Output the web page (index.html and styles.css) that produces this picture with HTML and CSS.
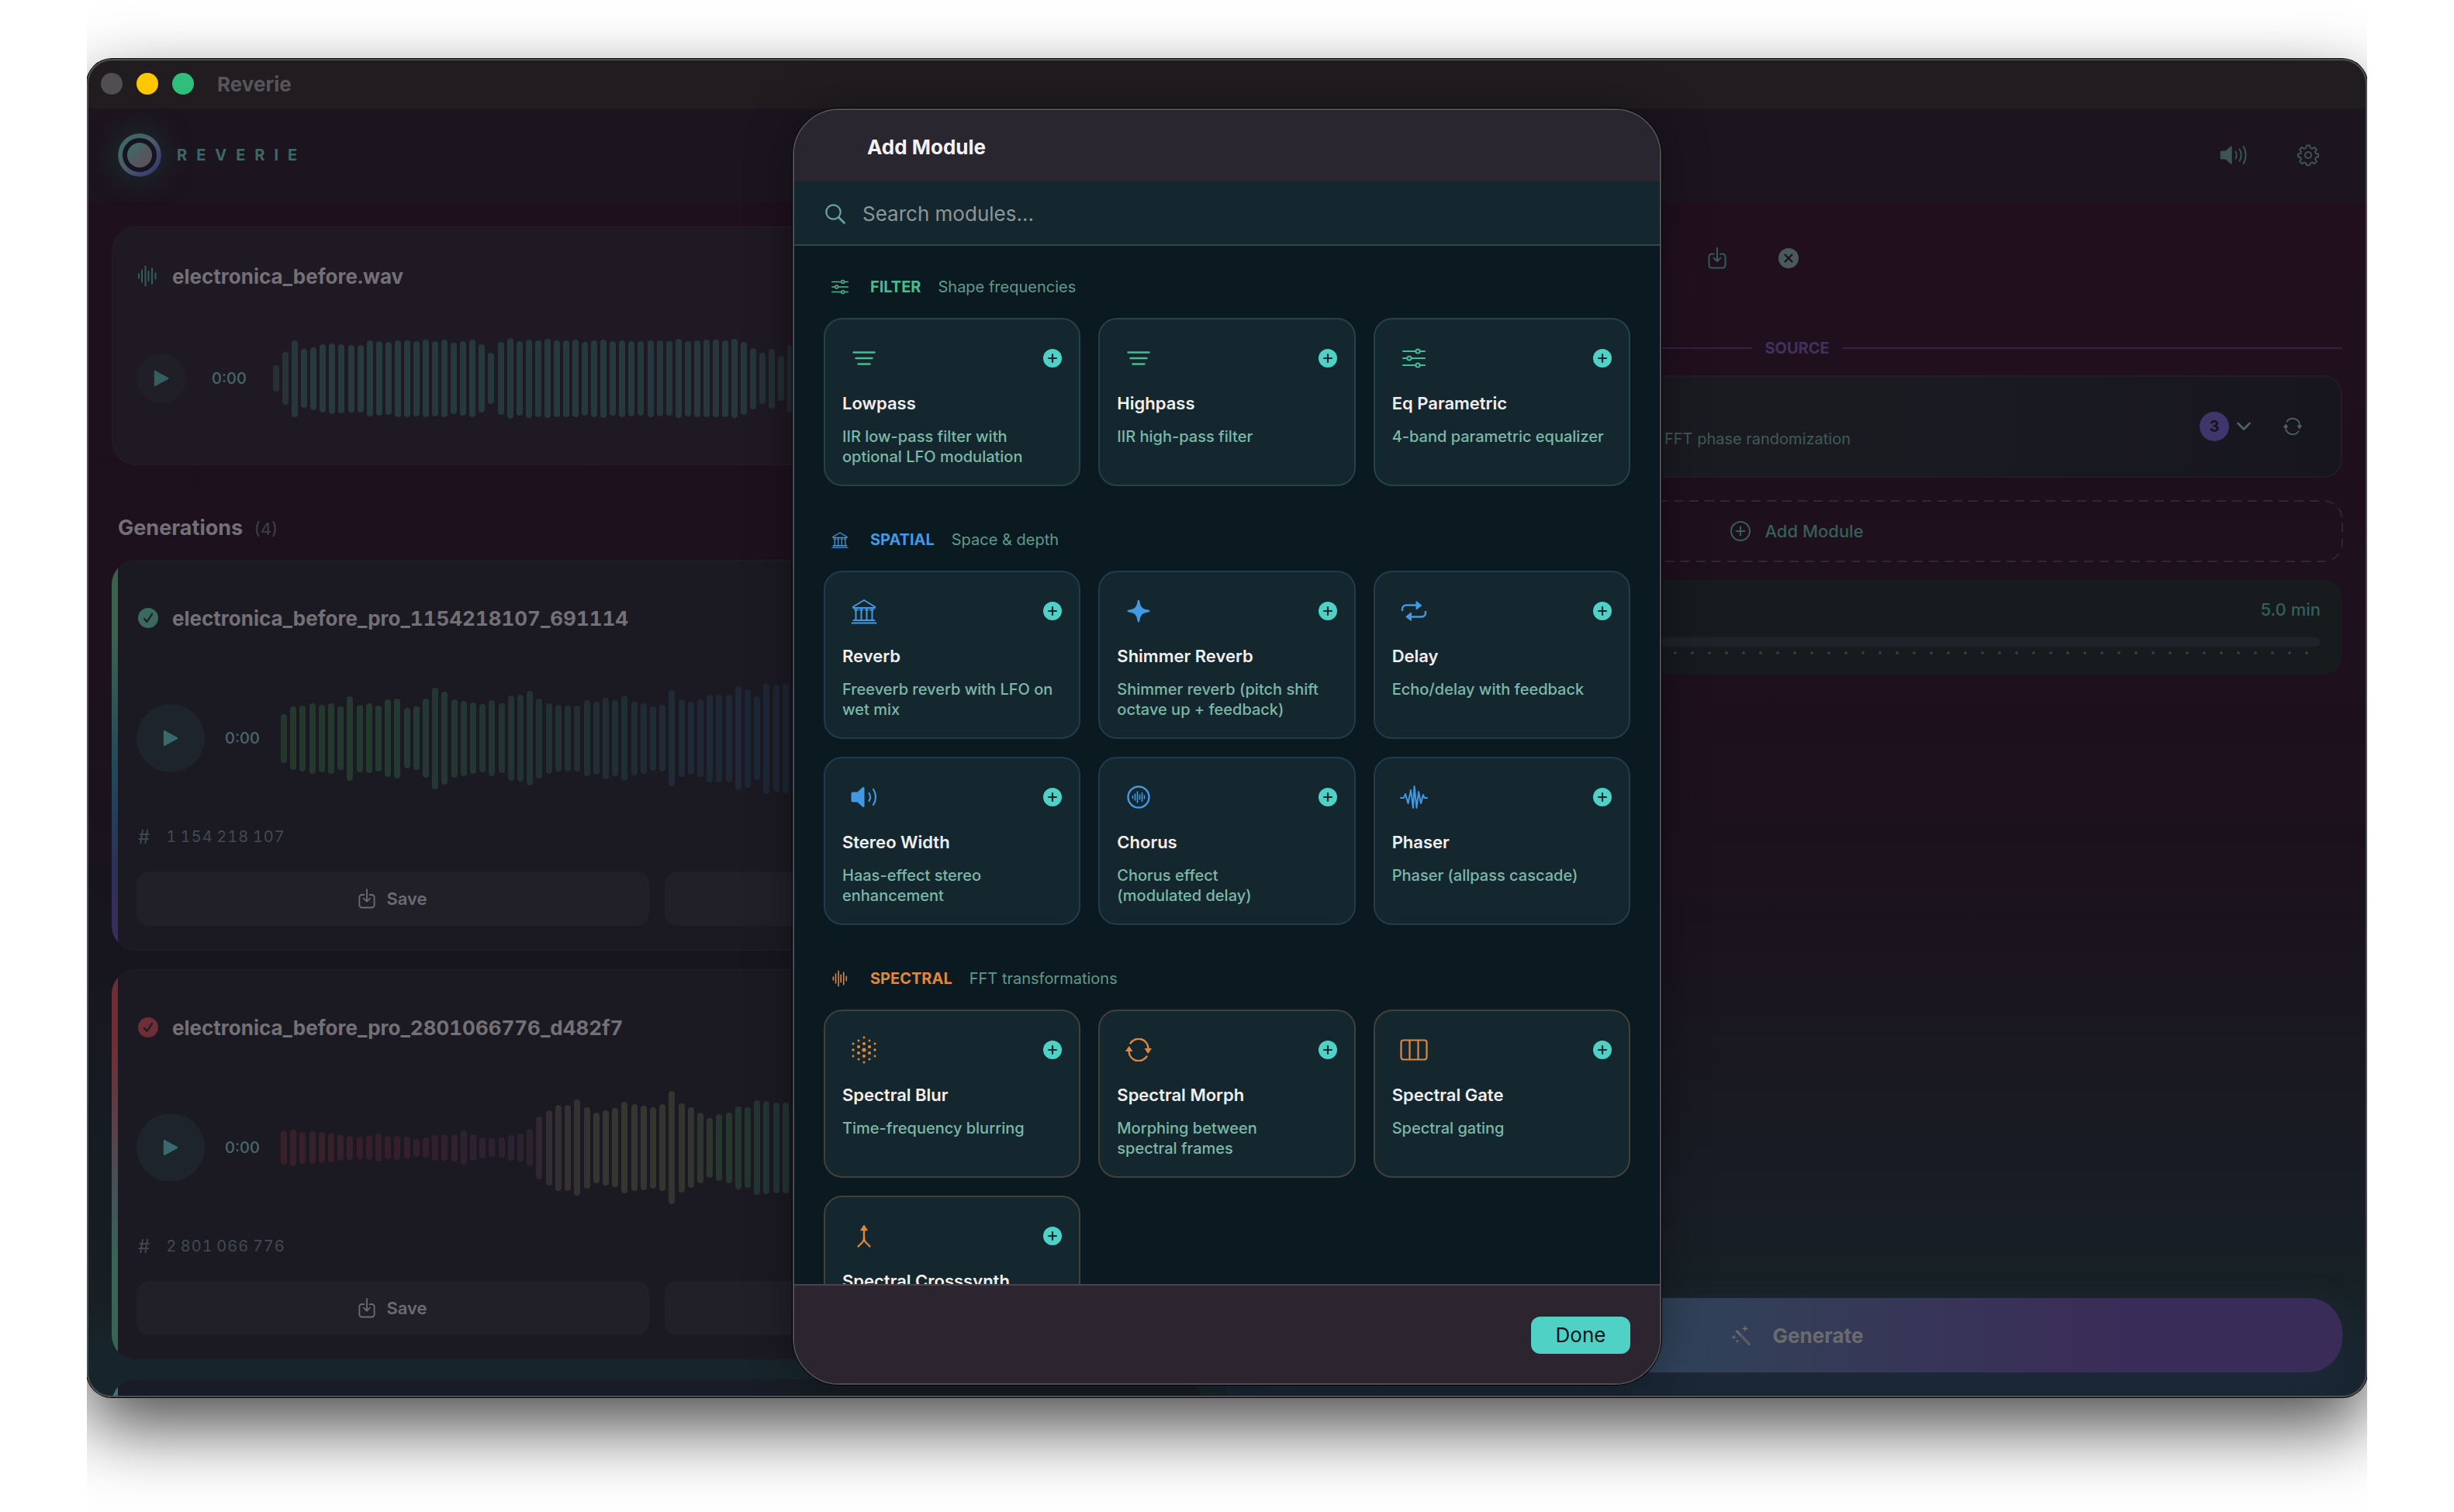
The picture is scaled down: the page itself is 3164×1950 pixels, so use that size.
FILE: index.html
```html
<!DOCTYPE html>
<html lang="en">
<head>
  <meta charset="UTF-8" />
  <meta name="viewport" content="width=device-width, initial-scale=1.0" />
  <title>Reverie</title>
  <link rel="stylesheet" href="styles.css">
</head>
<body>
  <!-- Icon set -->
  <svg class="icon-defs" aria-hidden="true">
    <defs>
      <linearGradient id="ringFill" x1="0" y1="0" x2="1" y2="1">
        <stop offset="0.1" stop-color="#3b6a61" />
        <stop offset="0.5" stop-color="#4b5a6c" />
        <stop offset="0.9" stop-color="#373c70" />
      </linearGradient>
      <linearGradient id="coreFill" x1="0" y1="0" x2="1" y2="1">
        <stop offset="0.1" stop-color="#3a6c68" />
        <stop offset="0.6" stop-color="#56565f" />
        <stop offset="1" stop-color="#58525a" />
      </linearGradient>
    </defs>
    <symbol id="i-wave" viewBox="0 0 28 28">
      <path d="M3 11.500v5M7 6.500v15M11.500 1.500v25M15.500 8v12M20 4v20M24.500 10.500v7" stroke="currentColor" stroke-width="2" stroke-linecap="round" fill="none" />
    </symbol>
    <symbol id="i-sliders" viewBox="0 0 30 26">
      <g stroke="currentColor" stroke-width="2" stroke-linecap="round" fill="none">
        <path d="M1 4h16M23 4h6M1 13h5M12 13h17M1 22h16M23 22h6" />
        <circle cx="20" cy="4" r="2.600" /><circle cx="9" cy="13" r="2.600" /><circle cx="20" cy="22" r="2.600" />
      </g>
    </symbol>
    <symbol id="i-lines" viewBox="0 0 30 26">
      <path d="M1.500 5.500h27M4.500 13h21M7.500 20.500h15" stroke="currentColor" stroke-width="2.400" stroke-linecap="round" />
    </symbol>
    <symbol id="i-building" viewBox="0 0 34 34">
      <g stroke="currentColor" stroke-width="2" stroke-linecap="round" stroke-linejoin="round" fill="none">
        <path d="M3 11.500 17 3l14 8.500v1.500H3zM1.500 32.500h31M3.500 29h27" />
        <path d="M6.500 15v13M13.500 15v13M20.500 15v13M27.500 15v13M5 15.500h4M12 15.500h3M19 15.500h3M25 15.500h4" />
      </g>
    </symbol>
    <symbol id="i-sparkle" viewBox="0 0 30 30">
      <path d="M15 .5c.9 0 1.200 1 1.400 2 1 7 3.100 10.100 11.100 11.100 1 .2 2 .5 2 1.400s-1 1.200-2 1.400c-8 1-10.100 4.100-11.100 11.100-.2 1-.5 2-1.400 2s-1.200-1-1.400-2c-1-7-3.100-10.100-11.100-11.100-1-.2-2-.5-2-1.400s1-1.200 2-1.400c8-1 10.100-4.100 11.100-11.100.2-1 .5-2 1.400-2z" fill="currentColor" />
    </symbol>
    <symbol id="i-repeat" viewBox="0 0 34 28">
      <path d="M2 13v-1.500a5 5 0 0 1 5-5h13M32 15v1.500a5 5 0 0 1-5 5H14" stroke="currentColor" stroke-width="2.400" stroke-linecap="round" fill="none" />
      <path d="M19.500 2v9.500c0 .8.700 1 1.300.6l6-4.600c.5-.4.500-.9 0-1.300l-6-4.600c-.6-.4-1.300-.3-1.300.4zM14 16.500V26c0 .8-.7 1-1.300.6l-6-4.600c-.5-.4-.5-.9 0-1.300l6-4.600c.6-.4 1.300-.3 1.300.4z" fill="currentColor" />
    </symbol>
    <symbol id="i-speaker" viewBox="0 0 34 28">
      <path d="M3 7.500h5.500l6.500-6c1.200-1 2.500-.6 2.500 1v23c0 1.600-1.300 2-2.500 1l-6.500-6H3c-1.800 0-2.500-.8-2.500-2.500v-8C.5 8.300 1.200 7.500 3 7.500z" fill="currentColor" />
      <path d="M23.500 9c1.900 3 1.900 7 0 10M29 4c4 6 4 14 0 20" stroke="currentColor" stroke-width="2.200" stroke-linecap="round" fill="none" />
    </symbol>
    <symbol id="i-speaker-max" viewBox="0 0 36 28">
      <path d="M3 8.500h4.500l6-5.500c1-.9 2.200-.5 2.200 1v20c0 1.500-1.200 1.900-2.200 1l-6-5.500H3c-1.600 0-2.300-.8-2.300-2.300v-6.400C.7 9.300 1.400 8.500 3 8.500z" fill="currentColor" />
      <path d="M20.500 9.500c1.500 2.700 1.500 6.300 0 9M25.500 6.500c2.700 4.500 2.700 10.500 0 15M30.500 3c4 6.500 4 15.500 0 22" stroke="currentColor" stroke-width="2" stroke-linecap="round" fill="none" />
    </symbol>
    <symbol id="i-wave-circle" viewBox="0 0 30 30">
      <g stroke="currentColor" stroke-linecap="round" fill="none">
        <circle cx="15" cy="15" r="13.500" stroke-width="2.400" />
        <path d="M7.500 13.500v3M10.500 11v8M13.500 8v14M16.500 12v6M19.500 9.500v11M22.500 13v4" stroke-width="1.600" />
      </g>
    </symbol>
    <symbol id="i-ecg" viewBox="0 0 36 32">
      <path d="M1 17h4l2-5 3.500 12L14 7l3 23L18.500 2l3 28L24 9l3 15 3-11 1.500 4H35" stroke="currentColor" stroke-width="2" stroke-linecap="round" stroke-linejoin="round" fill="none" />
    </symbol>
    <symbol id="i-dots" viewBox="0 0 36 36">
      <g fill="currentColor">
        <circle cx="18" cy="18" r="2.600" />
        <circle cx="18" cy="10" r="2.100" /><circle cx="18" cy="26" r="2.100" />
        <circle cx="11" cy="14" r="2.100" /><circle cx="11" cy="22" r="2.100" />
        <circle cx="25" cy="14" r="2.100" /><circle cx="25" cy="22" r="2.100" />
        <circle cx="11" cy="6" r="1.500" /><circle cx="25" cy="6" r="1.500" />
        <circle cx="11" cy="30" r="1.500" /><circle cx="25" cy="30" r="1.500" />
        <circle cx="4" cy="10" r="1.500" /><circle cx="32" cy="10" r="1.500" />
        <circle cx="4" cy="26" r="1.500" /><circle cx="32" cy="26" r="1.500" />
        <circle cx="4" cy="18" r="1.700" /><circle cx="32" cy="18" r="1.700" />
        <circle cx="18" cy="2" r="1.500" /><circle cx="18" cy="34" r="1.500" />
      </g>
    </symbol>
    <symbol id="i-cycle" viewBox="0 0 36 30">
      <path d="M7.500 6.500A12.500 12.500 0 0 1 30.500 13M28.500 23.500A12.500 12.500 0 0 1 5.500 17" stroke="currentColor" stroke-width="2.400" stroke-linecap="round" fill="none" />
      <path d="M25.500 13h9.500l-4.200 6.200c-.3.500-.9.500-1.200 0zM1 17h9.500L6.300 10.800c-.3-.5-.9-.5-1.200 0z" fill="currentColor" />
    </symbol>
    <symbol id="i-columns" viewBox="0 0 36 28">
      <path d="M4.500 1.500h27a3 3 0 0 1 3 3v19a3 3 0 0 1-3 3h-27a3 3 0 0 1-3-3v-19a3 3 0 0 1 3-3zM12.500 1.500v25M23.500 1.500v25" stroke="currentColor" stroke-width="2.200" fill="none" />
    </symbol>
    <symbol id="i-merge" viewBox="0 0 20 30">
      <path d="M10 6v11c0 3-.6 4.500-2 6l-5.500 5.500M10 17c0 3 .6 4.500 2 6l5.500 5.500" stroke="currentColor" stroke-width="2.400" stroke-linecap="round" fill="none" />
      <path d="M10.600 1.200l4 6c.3.600.1 1-.6 1H6c-.7 0-.9-.4-.6-1l4-6c.4-.5.800-.5 1.200 0z" fill="currentColor" />
    </symbol>
    <symbol id="i-plus-solid" viewBox="0 0 22 22">
      <circle cx="11" cy="11" r="11" fill="#4fd1c5" />
      <path d="M11 6.500v9M6.500 11h9" stroke="#14272e" stroke-width="2" stroke-linecap="round" />
    </symbol>
    <symbol id="i-plus-circle" viewBox="0 0 26 26">
      <circle cx="13" cy="13" r="12" stroke="currentColor" stroke-width="2" fill="none" />
      <path d="M13 7.500v11M7.500 13h11" stroke="currentColor" stroke-width="2" stroke-linecap="round" />
    </symbol>
    <symbol id="i-search" viewBox="0 0 26 26">
      <circle cx="10.500" cy="10.500" r="9.200" stroke="currentColor" stroke-width="2.200" fill="none" />
      <path d="M17.500 17.500l7 7" stroke="currentColor" stroke-width="2.600" stroke-linecap="round" />
    </symbol>
    <symbol id="i-save" viewBox="0 0 24 28">
      <path d="M8 8.500H5a3.500 3.500 0 0 0-3.500 3.500v11A3.500 3.500 0 0 0 5 26.500h14a3.500 3.500 0 0 0 3.500-3.500V12A3.500 3.500 0 0 0 19 8.500h-3M12 1v16.500M7.500 13.500l4.500 4.500 4.500-4.500" stroke="currentColor" stroke-width="2" stroke-linecap="round" stroke-linejoin="round" fill="none" />
    </symbol>
    <symbol id="i-close" viewBox="0 0 26 26">
      <circle cx="13" cy="13" r="13" fill="currentColor" />
      <path d="M8.500 8.500l9 9M17.500 8.500l-9 9" stroke="#210f1e" stroke-width="2.200" stroke-linecap="round" />
    </symbol>
    <symbol id="i-check" viewBox="0 0 26 26">
      <circle cx="13" cy="13" r="13" fill="currentColor" />
      <path d="M8 14l3.500 4L18 8" stroke="#1c1a22" stroke-width="2.200" stroke-linecap="round" stroke-linejoin="round" fill="none" />
    </symbol>
    <symbol id="i-play" viewBox="0 0 24 24">
      <path d="M2 2.500v19c0 1.300 1 1.700 2 1.100l17.500-9.500c.9-.6.900-1.600 0-2.200L4 1.400c-1-.6-2-.2-2 1.100z" fill="currentColor" />
    </symbol>
    <symbol id="i-gear" viewBox="0 0 28 28">
      <g stroke="currentColor" stroke-width="2" stroke-linejoin="round" fill="none">
        <path d="M12 1.500h4l.8 3.300 2.300 1 2.900-1.800 2.900 2.800-1.800 3 .9 2.200 3.200.8v3.400l-3.200.8-.9 2.300 1.800 3-2.900 2.800-2.900-1.800-2.300 1-.8 3h-4l-.8-3-2.300-1L6 25.100l-2.900-2.800 1.800-3-.9-2.300-3-.8v-3.400l3-.8.900-2.200-1.800-3L6 4l2.900 1.800 2.300-1z" />
        <circle cx="14" cy="14" r="4" />
      </g>
    </symbol>
    <symbol id="i-chevron" viewBox="0 0 18 12">
      <path d="M1.500 2L9 9.500 16.500 2" stroke="currentColor" stroke-width="2.600" stroke-linecap="round" stroke-linejoin="round" fill="none" />
    </symbol>
    <symbol id="i-wand" viewBox="0 0 26 26">
      <path d="M7.500 8L23.500 24.500" stroke="currentColor" stroke-width="3" stroke-linecap="round" />
      <path d="M12 12.600L23.300 24.300" stroke="#343c56" stroke-width="1" stroke-linecap="round" />
      <path d="M18 0c.5 3 1.500 4 5 4.500-3.500.5-4.500 1.500-5 4.500-.5-3-1.500-4-5-4.500 3.500-.5 4.500-1.500 5-4.500zM3.500 12c.4 2.400 1.100 3.100 3.500 3.500-2.400.4-3.100 1.100-3.500 3.500-.4-2.400-1.100-3.100-3.500-3.500 2.400-.4 3.100-1.100 3.500-3.500zM8 18c.3 1.900.9 2.500 3 2.800-2.100.3-2.700.9-3 2.800-.3-1.900-.9-2.500-3-2.800 2.100-.3 2.700-.9 3-2.800z" fill="currentColor" />
    </symbol>
  </svg>

  <div class="stage">
    <div class="window">
      <div class="titlebar">
        <span class="light close"></span>
        <span class="light minimize"></span>
        <span class="light zoom"></span>
        <span class="window-title">Reverie</span>
      </div>

      <header class="app-header">
        <svg class="logo" viewBox="0 0 56 56">
          <circle cx="28" cy="28" r="25" fill="#171422" stroke="url(#ringFill)" stroke-width="6" />
          <circle cx="28" cy="28" r="16" fill="url(#coreFill)" />
        </svg>
        <span class="brand">REVERIE</span>
        <button class="icon-btn" aria-label="Volume"><svg width="36" height="28"><use href="#i-speaker-max" /></svg></button>
        <button class="icon-btn" aria-label="Settings"><svg width="28" height="28"><use href="#i-gear" /></svg></button>
      </header>

      <main class="panels">
        <!-- Left: source file and results -->
        <section class="panel library">
          <div class="track source">
            <div class="track-head">
              <svg class="teal" width="28" height="28"><use href="#i-wave" /></svg>
              <h3>electronica_before.wav</h3>
            </div>
            <div class="player">
              <button class="play small" aria-label="Play"><svg width="22" height="22"><use href="#i-play" /></svg></button>
              <span class="time">0:00</span>
              <div class="waveform" data-wave="source"></div>
            </div>
          </div>

          <h2>Generations <span>(4)</span></h2>

          <div class="track result green">
            <div class="track-head">
              <svg class="state" width="26" height="26"><use href="#i-check" /></svg>
              <h3>electronica_before_pro_1154218107_691114</h3>
            </div>
            <div class="player">
              <button class="play" aria-label="Play"><svg width="22" height="22"><use href="#i-play" /></svg></button>
              <span class="time">0:00</span>
              <div class="waveform" data-wave="first"></div>
            </div>
            <div class="seed"><span>#</span>1&#8201;154&#8201;218&#8201;107</div>
            <div class="actions">
              <button><svg width="22" height="26"><use href="#i-save" /></svg>Save</button>
              <button aria-label="More"></button>
            </div>
          </div>

          <div class="track result red">
            <div class="track-head">
              <svg class="state" width="26" height="26"><use href="#i-check" /></svg>
              <h3>electronica_before_pro_2801066776_d482f7</h3>
            </div>
            <div class="player">
              <button class="play" aria-label="Play"><svg width="22" height="22"><use href="#i-play" /></svg></button>
              <span class="time">0:00</span>
              <div class="waveform" data-wave="second"></div>
            </div>
            <div class="seed"><span>#</span>2&#8201;801&#8201;066&#8201;776</div>
            <div class="actions">
              <button><svg width="22" height="26"><use href="#i-save" /></svg>Save</button>
              <button aria-label="More"></button>
            </div>
          </div>

          <div class="track result next"></div>
        </section>

        <!-- Right: processing chain -->
        <section class="panel chain">
          <div class="toolbar">
            <button class="icon-btn teal" aria-label="Save preset"><svg width="24" height="28"><use href="#i-save" /></svg></button>
            <button class="icon-btn" aria-label="Clear"><svg width="26" height="26"><use href="#i-close" /></svg></button>
          </div>

          <div class="divider">SOURCE</div>

          <div class="source-module">
            <p>FFT phase randomization</p>
            <button class="variant" aria-label="Variants"><span class="badge">3</span><svg width="18" height="12"><use href="#i-chevron" /></svg></button>
            <button class="icon-btn" aria-label="Shuffle"><svg width="26" height="24"><use href="#i-cycle" /></svg></button>
          </div>

          <button class="add-module">
            <svg class="dashes"><rect width="100%" height="100%" rx="24" /></svg>
            <svg width="26" height="26"><use href="#i-plus-circle" /></svg>Add Module
          </button>

          <div class="duration">
            <output for="duration">5.0 min</output>
            <input type="range" id="duration" aria-label="Duration" min="0" max="60" value="5" />
            <div class="ticks"></div>
          </div>

          <button class="generate"><svg width="26" height="26"><use href="#i-wand" /></svg>Generate</button>
        </section>
      </main>

      <!-- Add Module sheet -->
      <div class="overlay">
        <div class="modal" role="dialog" aria-labelledby="modalTitle">
          <h2 class="modal-title" id="modalTitle">Add Module</h2>
          <label class="search">
            <svg width="26" height="26"><use href="#i-search" /></svg>
            <input type="text" placeholder="Search modules..." aria-label="Search modules" />
          </label>

          <div class="modal-body">
            <section class="category filter">
              <h3><svg width="22" height="20"><use href="#i-sliders" /></svg>FILTER <small>Shape frequencies</small></h3>
              <div class="grid">
                <div class="card">
                  <div class="card-top"><span class="glyph"><svg width="30" height="26"><use href="#i-lines" /></svg></span><button class="add" aria-label="Add Lowpass"><svg><use href="#i-plus-solid" /></svg></button></div>
                  <h4>Lowpass</h4>
                  <p>IIR low-pass filter with optional LFO modulation</p>
                </div>
                <div class="card">
                  <div class="card-top"><span class="glyph"><svg width="30" height="26"><use href="#i-lines" /></svg></span><button class="add" aria-label="Add Highpass"><svg><use href="#i-plus-solid" /></svg></button></div>
                  <h4>Highpass</h4>
                  <p>IIR high-pass filter</p>
                </div>
                <div class="card">
                  <div class="card-top"><span class="glyph"><svg width="30" height="26"><use href="#i-sliders" /></svg></span><button class="add" aria-label="Add Eq Parametric"><svg><use href="#i-plus-solid" /></svg></button></div>
                  <h4>Eq Parametric</h4>
                  <p>4-band parametric equalizer</p>
                </div>
              </div>
            </section>

            <section class="category spatial">
              <h3><svg width="22" height="22"><use href="#i-building" /></svg>SPATIAL <small>Space &amp; depth</small></h3>
              <div class="grid">
                <div class="card">
                  <div class="card-top"><span class="glyph"><svg width="34" height="34"><use href="#i-building" /></svg></span><button class="add" aria-label="Add Reverb"><svg><use href="#i-plus-solid" /></svg></button></div>
                  <h4>Reverb</h4>
                  <p>Freeverb reverb with LFO on wet mix</p>
                </div>
                <div class="card">
                  <div class="card-top"><span class="glyph"><svg width="30" height="30"><use href="#i-sparkle" /></svg></span><button class="add" aria-label="Add Shimmer Reverb"><svg><use href="#i-plus-solid" /></svg></button></div>
                  <h4>Shimmer Reverb</h4>
                  <p>Shimmer reverb (pitch shift octave up + feedback)</p>
                </div>
                <div class="card">
                  <div class="card-top"><span class="glyph"><svg width="34" height="28"><use href="#i-repeat" /></svg></span><button class="add" aria-label="Add Delay"><svg><use href="#i-plus-solid" /></svg></button></div>
                  <h4>Delay</h4>
                  <p>Echo/delay with feedback</p>
                </div>
                <div class="card">
                  <div class="card-top"><span class="glyph"><svg width="34" height="28"><use href="#i-speaker" /></svg></span><button class="add" aria-label="Add Stereo Width"><svg><use href="#i-plus-solid" /></svg></button></div>
                  <h4>Stereo Width</h4>
                  <p>Haas-effect stereo enhancement</p>
                </div>
                <div class="card">
                  <div class="card-top"><span class="glyph"><svg width="30" height="30"><use href="#i-wave-circle" /></svg></span><button class="add" aria-label="Add Chorus"><svg><use href="#i-plus-solid" /></svg></button></div>
                  <h4>Chorus</h4>
                  <p>Chorus effect<br>(modulated delay)</p>
                </div>
                <div class="card">
                  <div class="card-top"><span class="glyph"><svg width="36" height="32"><use href="#i-ecg" /></svg></span><button class="add" aria-label="Add Phaser"><svg><use href="#i-plus-solid" /></svg></button></div>
                  <h4>Phaser</h4>
                  <p>Phaser (allpass cascade)</p>
                </div>
              </div>
            </section>

            <section class="category spectral">
              <h3><svg width="22" height="22"><use href="#i-wave" /></svg>SPECTRAL <small>FFT transformations</small></h3>
              <div class="grid">
                <div class="card">
                  <div class="card-top"><span class="glyph"><svg width="36" height="36"><use href="#i-dots" /></svg></span><button class="add" aria-label="Add Spectral Blur"><svg><use href="#i-plus-solid" /></svg></button></div>
                  <h4>Spectral Blur</h4>
                  <p>Time-frequency blurring</p>
                </div>
                <div class="card">
                  <div class="card-top"><span class="glyph"><svg width="36" height="30"><use href="#i-cycle" /></svg></span><button class="add" aria-label="Add Spectral Morph"><svg><use href="#i-plus-solid" /></svg></button></div>
                  <h4>Spectral Morph</h4>
                  <p>Morphing between<br>spectral frames</p>
                </div>
                <div class="card">
                  <div class="card-top"><span class="glyph"><svg width="36" height="28"><use href="#i-columns" /></svg></span><button class="add" aria-label="Add Spectral Gate"><svg><use href="#i-plus-solid" /></svg></button></div>
                  <h4>Spectral Gate</h4>
                  <p>Spectral gating</p>
                </div>
                <div class="card">
                  <div class="card-top"><span class="glyph"><svg width="20" height="30"><use href="#i-merge" /></svg></span><button class="add" aria-label="Add Spectral Crosssynth"><svg><use href="#i-plus-solid" /></svg></button></div>
                  <h4>Spectral Crosssynth</h4>
                </div>
              </div>
            </section>
          </div>

          <footer class="modal-footer">
            <button class="done">Done</button>
          </footer>
        </div>
      </div>
    </div>
  </div>

  <script src="waveforms.js"></script>
</body>
</html>
```
FILE: styles.css
```css
* {
  margin: 0;
  padding: 0;
  box-sizing: border-box;
}

body {
  font-family: Inter, "Liberation Sans", sans-serif;
  background-color: white;
  color: #737076;
}

button {
  font: inherit;
  color: inherit;
  background: none;
  border: none;
  cursor: pointer;
}

svg {
  display: block;
  flex-shrink: 0;
}

.icon-defs {
  position: absolute;
  width: 0;
  height: 0;
}

.teal {
  color: #2f5f5c;
}

/* The shadow is cut off at the sides of the window */
.stage {
  height: 100vh;
  margin: 0 112px;
  padding: 76px 0 148px;
  overflow: hidden;
}

.window {
  position: relative;
  height: 100%;
  display: flex;
  flex-direction: column;
  border-radius: 32px;
  overflow: hidden;
  background: linear-gradient(to bottom, #1f101d 0%, #1d111d 45%, #17151e 65%, #161a22 80%, #181e22 92%, #16252b 97%);
  box-shadow: 0 38px 92px rgba(0, 0, 0, 0.7), 0 0 0 1px #000;
}

.window::after {
  content: "";
  position: absolute;
  inset: 0;
  border: 2px solid #4f4e52;
  border-radius: 32px;
  pointer-events: none;
}

/* Title bar */
.titlebar {
  display: flex;
  align-items: center;
  gap: 18px;
  height: 64px;
  padding: 0 18px;
  background-color: #211c20;
}

.light {
  width: 28px;
  height: 28px;
  border-radius: 50%;
}

.light.close { background-color: #504e52; }
.light.minimize { background-color: #fec700; }
.light.zoom { background-color: #2fbf7b; }

.window-title {
  margin-left: 12px;
  font-size: 26px;
  font-weight: 700;
  color: #57545a;
}

/* App header */
.app-header {
  display: flex;
  align-items: center;
  height: 120px;
  padding: 0 44px 0 40px;
  background-color: #1c151f;
  color: #3b5553;
}

.logo {
  width: 56px;
  height: 56px;
  border-radius: 50%;
  box-shadow: 0 0 28px 10px #1b242a;
}

.brand {
  flex: 1;
  margin-left: 20px;
  font-size: 20px;
  font-weight: 700;
  letter-spacing: 12px;
  color: #3b6a66;
}

.icon-btn {
  display: flex;
  align-items: center;
  justify-content: center;
  width: 64px;
  height: 64px;
}

.app-header .icon-btn + .icon-btn {
  margin-left: 32px;
}

/* Panels */
.panels {
  flex: 1;
  min-height: 0;
  display: grid;
  grid-template-columns: 1fr 1fr;
}

.panel {
  display: flex;
  flex-direction: column;
  min-width: 0;
  min-height: 0;
  padding: 32px;
}

.library {
  overflow: hidden;
}

.library h2 {
  flex-shrink: 0;
  margin: 65px 0 24px;
  padding-left: 8px;
  font-size: 27px;
  line-height: 32px;
  font-weight: 700;
}

.library h2 span {
  margin-left: 8px;
  font-size: 22px;
  font-weight: 400;
  color: #34454b;
}

.track {
  position: relative;
  flex-shrink: 0;
  padding: 32px;
  border-radius: 32px;
  background-color: #1e1922;
  box-shadow: inset 0 0 0 1px #231e27;
  overflow: hidden;
}

.track-head {
  display: flex;
  align-items: center;
  gap: 18px;
  height: 64px;
}

.track-head h3 {
  font-size: 26px;
  font-weight: 700;
  font-variant-numeric: tabular-nums;
}

.player {
  display: flex;
  align-items: center;
  gap: 26px;
  height: 176px;
}

.source .player {
  gap: 33px;
  height: 160px;
  margin-top: 20px;
}

.play {
  display: flex;
  flex-shrink: 0;
  align-items: center;
  justify-content: center;
  width: 88px;
  height: 88px;
  border-radius: 50%;
  background-color: #1d242c;
  color: #376a6b;
}

.play.small {
  width: 64px;
  height: 64px;
  background-color: #201f28;
  color: #33605f;
}

.time {
  width: 46px;
  font-size: 20px;
  font-weight: 500;
  color: #48666a;
}

.waveform {
  flex: 1;
  display: flex;
  align-items: center;
  justify-content: space-between;
  height: 100%;
  overflow: hidden;
}

.waveform i {
  flex-shrink: 0;
  width: 8px;
  border-radius: 4px;
}

.result {
  margin-bottom: 24px;
  background-color: #1b1a22;
}

.result::before {
  content: "";
  position: absolute;
  left: 0;
  top: 0;
  bottom: 0;
  width: 8px;
}

.result.green::before { background: linear-gradient(#3a624f 20%, #20475a 55%, #2c3058 80%, #3f2c5e); }
.result.red::before { background: linear-gradient(#6e2e35 20%, #57424a 42%, #43545a 60%, #376456 75%); }
.result.next::before { background-color: #3f7570; }

.green .state { color: #3a6a5b; }
.red .state { color: #6e2e36; }

.result .track-head {
  height: 86px;
  margin-bottom: 24px;
  padding-left: 2px;
}

.result.next {
  height: 504px;
  background-color: #181c26;
}

.seed {
  display: flex;
  align-items: center;
  gap: 20px;
  height: 26px;
  margin: 26px 0 32px;
  padding-left: 2px;
  font-size: 20px;
  font-variant-numeric: tabular-nums;
  letter-spacing: 1px;
  color: #3f4a52;
}

.seed span {
  font-size: 24px;
}

.actions {
  display: flex;
  gap: 20px;
}

.actions button {
  flex: 1;
  display: flex;
  align-items: center;
  justify-content: center;
  gap: 14px;
  height: 70px;
  border-radius: 16px;
  background-color: #211f28;
  font-size: 22px;
  font-weight: 600;
  color: #6c6b70;
}

/* Processing chain */
.chain {
  background: linear-gradient(to bottom, #210f1e 0%, #1e101c 40%, #1b121d 56%, #191820 72%, #181d26 84%, #172125 90%, #192733 100%);
}

.toolbar {
  display: flex;
  gap: 28px;
  height: 82px;
  align-items: center;
  padding-left: 568px;
  color: #4a5a58;
}

.divider {
  display: flex;
  align-items: center;
  gap: 16px;
  margin: 62px 0 22px;
  font-size: 20px;
  line-height: 26px;
  font-weight: 700;
  color: #40325f;
}

.divider::before,
.divider::after {
  content: "";
  flex: 1;
  height: 2px;
  background-color: #33233d;
}

.source-module {
  display: flex;
  align-items: center;
  height: 132px;
  padding: 0 30px 0 530px;
  border: 2px solid #221c29;
  border-radius: 24px;
  background: linear-gradient(to right, #1a1a21, #1a1a21 60%, #17161f);
}

.source-module p {
  flex: 1;
  padding-top: 32px;
  font-size: 20px;
  color: #3f5c56;
}

.variant {
  display: flex;
  align-items: center;
  gap: 10px;
  margin-right: 22px;
}

.badge {
  width: 38px;
  height: 38px;
  border-radius: 50%;
  background-color: #40366b;
  color: #17131f;
  font-size: 20px;
  line-height: 38px;
  font-weight: 700;
}

.source-module svg {
  color: #4f6560;
}

.add-module {
  position: relative;
  display: flex;
  align-items: center;
  justify-content: center;
  gap: 18px;
  height: 78px;
  margin: 30px 0 24px;
  font-size: 22px;
  font-weight: 500;
  color: #34605a;
}

.add-module .dashes {
  position: absolute;
  inset: 0;
  width: 100%;
  height: 100%;
  overflow: visible;
  fill: none;
  stroke: #2b2933;
  stroke-width: 2px;
  stroke-dasharray: 12 8;
}

.duration {
  display: flex;
  flex-direction: column;
  height: 122px;
  padding: 24px 28px;
  border-radius: 24px;
  background-color: #171b1e;
}

.duration output {
  align-self: flex-end;
  font-size: 22px;
  line-height: 28px;
  font-weight: 500;
  color: #34605a;
}

.duration input {
  appearance: none;
  width: 100%;
  height: 12px;
  margin-top: 22px;
  border-radius: 6px;
  background-color: #1f2228;
}

.duration input::-webkit-slider-thumb {
  appearance: none;
  width: 24px;
  height: 24px;
  border-radius: 50%;
  background-color: #376a6b;
}

.ticks {
  flex-shrink: 0;
  height: 4px;
  margin: 6px 16px 0 0;
  background: radial-gradient(circle at 20px 2px, #2f3c40 2px, transparent 2px) right top / 22px 4px;
}

.generate {
  display: flex;
  align-items: center;
  justify-content: center;
  gap: 28px;
  height: 96px;
  margin-top: auto;
  border-radius: 44px;
  background: linear-gradient(to right, #274b52, #30425a 38%, #343b57 52%, #393158 70%, #3a2c58 80%);
  box-shadow: 0 8px 40px rgba(50, 50, 90, 0.3);
  font-size: 26px;
  font-weight: 700;
  color: #6b6b6e;
}

/* Add Module sheet */
.overlay {
  position: absolute;
  inset: 64px 0 16px;
  display: flex;
  justify-content: center;
}

.modal {
  display: flex;
  flex-direction: column;
  width: 1120px;
  border: 2px solid #504e54;
  border-radius: 60px;
  background-color: #0b1a20;
  overflow: hidden;
  box-shadow: 0 0 0 1px #000, 0 0 60px rgba(0, 0, 0, 0.35);
}

.modal-title {
  flex-shrink: 0;
  height: 92px;
  padding: 0 94px;
  background-color: #29262f;
  color: #f4f2f5;
  font-size: 26px;
  line-height: 96px;
  font-weight: 700;
}

.search {
  display: flex;
  flex-shrink: 0;
  align-items: center;
  gap: 22px;
  height: 83px;
  padding: 2px 40px 0;
  border-bottom: 2px solid #2f484e;
  background-color: #14272e;
  color: #68a79d;
}

.search input {
  flex: 1;
  border: none;
  outline: none;
  background: none;
  color: #f4f2f5;
  font: inherit;
  font-size: 26px;
}

.search input::placeholder {
  color: #8d9699;
  opacity: 1;
}

.modal-body {
  flex: 1;
  min-height: 0;
  padding: 40px 38px;
  overflow: hidden;
}

.category {
  margin-bottom: 56px;
}

.category h3 {
  display: flex;
  align-items: center;
  margin-bottom: 27px;
  padding-left: 10px;
  font-size: 20px;
  line-height: 26px;
  font-weight: 700;
}

.category h3 svg {
  margin-right: 28px;
}

.category small {
  margin-left: 22px;
  font-size: 20px;
  font-weight: 400;
  color: #60998c;
}

.filter { color: #48bb93; --edge: #23434a; }
.spatial { color: #4299e1; --edge: #203c4e; }
.spectral { color: #dd8840; --edge: #43403b; }

.grid {
  display: grid;
  grid-template-columns: repeat(3, 1fr);
  gap: 23px;
}

.card {
  height: 217px;
  padding: 22px;
  border: 2px solid var(--edge);
  border-radius: 24px;
  background-color: #14272e;
}

.card-top {
  display: flex;
  align-items: center;
  justify-content: space-between;
  margin-bottom: 16px;
}

.glyph {
  display: flex;
  align-items: center;
  justify-content: center;
  width: 56px;
  height: 56px;
}

.add svg {
  width: 24px;
  height: 24px;
}

.card h4 {
  margin-bottom: 16px;
  font-size: 22px;
  line-height: 28px;
  font-weight: 600;
  color: #f1eff3;
}

.card p {
  font-size: 20px;
  line-height: 26px;
  font-weight: 500;
  color: #7cb8a8;
}

.modal-footer {
  display: flex;
  flex-shrink: 0;
  align-items: center;
  justify-content: flex-end;
  height: 128px;
  padding: 2px 38px 0;
  border-top: 2px solid #48434b;
  background-color: #2c242e;
}

.done {
  width: 128px;
  height: 48px;
  border-radius: 12px;
  background-color: #4fd1c5;
  color: #0d1719;
  font-size: 26px;
  line-height: 48px;
}
```
FILE: waveforms.js
```js
// Bar heights in px, and colour stops as [bar index, r, g, b].
// Heights repeat until the track has its full count of bars.
const waveforms = {
  source: {
    count: 97,
    bars: [34, 68, 99, 76, 81, 88, 91, 89, 87, 87, 98, 96, 94, 99, 99, 97, 100, 97, 100, 92, 96, 100, 88, 66, 94, 104, 96, 101, 99, 102, 99, 99, 100, 95, 99, 101, 96, 99, 97, 96, 99, 98, 96, 102, 97, 99, 100, 100, 99, 102, 94, 79, 66, 77, 58, 87, 92, 96],
    stops: [[0, 39, 48, 54], [3, 38, 58, 64], [50, 38, 56, 62], [55, 33, 42, 49]]
  },
  first: {
    count: 95,
    bars: [63, 82, 85, 91, 87, 91, 82, 109, 87, 90, 85, 100, 103, 78, 82, 102, 131, 120, 101, 97, 92, 88, 98, 90, 110, 112, 122, 103, 91, 86, 85, 85, 98, 94, 105, 98, 110, 95, 91, 83, 86, 124, 100, 94, 100, 113, 113, 113, 134, 127, 108, 143, 138, 142, 140, 141],
    stops: [[0, 37, 56, 46], [14, 36, 57, 49], [30, 34, 48, 52], [42, 31, 42, 54], [55, 28, 38, 54]]
  },
  second: {
    count: 95,
    bars: [44, 47, 41, 42, 40, 38, 34, 31, 29, 32, 36, 30, 31, 28, 23, 26, 33, 34, 35, 44, 34, 27, 24, 26, 33, 36, 48, 81, 97, 111, 111, 124, 105, 91, 97, 102, 118, 112, 109, 105, 112, 146, 115, 104, 91, 77, 86, 91, 107, 104, 122, 120, 117, 117, 127, 120],
    stops: [[0, 56, 32, 42], [14, 52, 31, 43], [19, 48, 33, 50], [26, 44, 34, 48], [28, 52, 46, 50], [34, 54, 54, 49], [42, 52, 53, 47], [48, 37, 54, 48], [55, 35, 52, 56]]
  }
};

function colorAt(stops, i) {
  let a = stops[0];
  let b = stops[stops.length - 1];
  for (let s = 0; s < stops.length - 1; s++) {
    if (i >= stops[s][0] && i <= stops[s + 1][0]) {
      a = stops[s];
      b = stops[s + 1];
    }
  }
  if (i > b[0]) a = b;
  const t = a === b ? 0 : (i - a[0]) / (b[0] - a[0]);
  const mix = [1, 2, 3].map(k => Math.round(a[k] + (b[k] - a[k]) * t));
  return `rgb(${mix.join(", ")})`;
}

document.querySelectorAll(".waveform").forEach(el => {
  const { count, bars, stops } = waveforms[el.dataset.wave];
  for (let i = 0; i < count; i++) {
    const bar = document.createElement("i");
    bar.style.height = bars[i % bars.length] + "px";
    bar.style.backgroundColor = colorAt(stops, i);
    el.appendChild(bar);
  }
});
```
